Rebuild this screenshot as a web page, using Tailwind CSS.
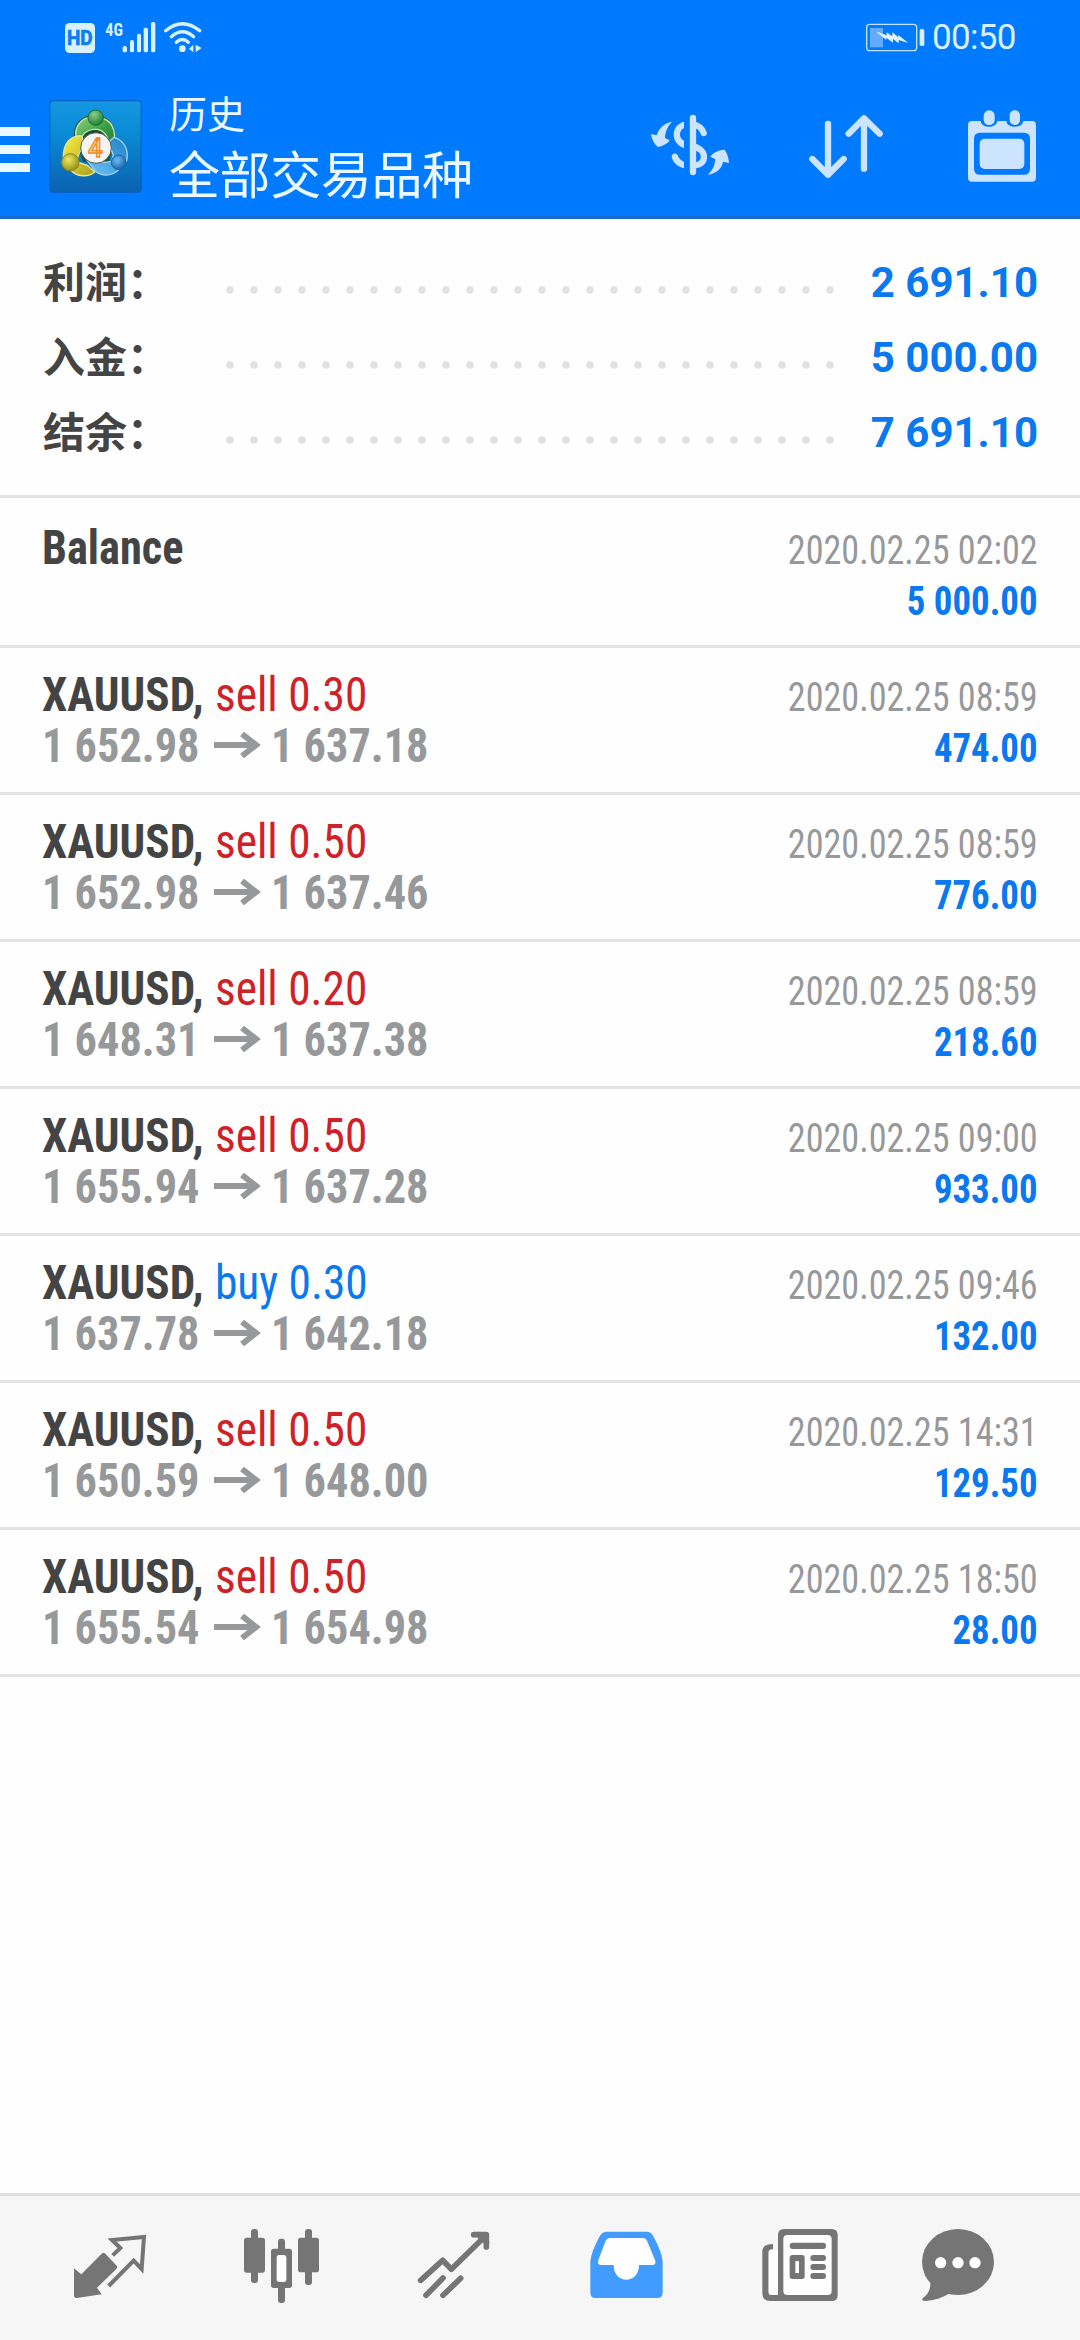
<!DOCTYPE html>
<html lang="zh-CN">
<head>
<meta charset="utf-8">
<title>历史</title>
<script src="https://cdn.jsdelivr.net/npm/@tailwindcss/browser@4"></script>
</head>
<body class="bg-white">
<div class="flex h-[2340px] w-[1080px] flex-col overflow-hidden bg-[#fefefe] font-['Roboto','Noto_Sans_CJK_SC',sans-serif]">

  <header class="h-[219px] shrink-0 border-b-[3px] border-[#1469cb] bg-[#007aff]">
    <div class="flex h-[76px] justify-between">
      <!-- HD badge, mobile signal, wifi -->
      <svg class="ml-[55px] mt-[10px] h-[55px] w-[160px]" viewBox="0 0 480 165" fill="#d9f0ff">
        <rect x="30" y="39" width="90" height="90" rx="14"/>
        <text x="36" y="105" font-family="Roboto" font-weight="700" font-size="59" textLength="77" lengthAdjust="spacingAndGlyphs" fill="#0f7cf0" stroke="#0f7cf0" stroke-width="2">HD</text>
        <text x="151" y="77" font-family="Roboto Condensed" font-weight="700" font-size="57" textLength="53" lengthAdjust="spacingAndGlyphs">4G</text>
        <rect x="203" y="108" width="13" height="19" rx="5"/>
        <rect x="225" y="90" width="12" height="37" rx="5"/>
        <rect x="246" y="71" width="12" height="56" rx="5"/>
        <rect x="266" y="53" width="13" height="74" rx="5"/>
        <rect x="288" y="36" width="13" height="91" rx="5"/>
        <g fill="none" stroke="#d9f0ff" stroke-width="10" stroke-linecap="round">
          <path d="M332 62Q382 20 434 62"/><path d="M349 80Q382 50 416 80"/><path d="M364 97Q382 80 400 97"/>
        </g>
        <circle cx="382" cy="116" r="10"/>
        <path d="M402 116L415 104V127ZM422 104L440 114L430 121L422 127Z"/>
      </svg>
      <!-- battery and clock -->
      <div class="mr-[57px] flex pt-[10px]">
        <svg class="h-[55px] w-[77px]" viewBox="0 0 231 165">
          <rect x="35" y="43" width="150" height="79" rx="9" fill="none" stroke="#bfe3ff" stroke-width="4"/>
          <rect x="45" y="54" width="39" height="58" fill="#62abff"/>
          <path d="M62 64L95 76V67L112 79V67L130 82V75L160 99L131 90V100L114 87V98L94 83V90Z" fill="#e2f4ff"/>
          <rect x="194" y="57" width="14" height="51" rx="5" fill="#d9f0ff"/>
        </svg>
        <span class="w-[91px] pt-px text-[35px] leading-[54px] tracking-[-0.7px] text-[#d9f0ff]">00:50</span>
      </div>
    </div>

    <div class="flex h-[140px]">
      <div class="flex w-[30px] shrink-0 flex-col gap-[9px] pt-[51px]">
        <i class="h-[9px] bg-[#ebf8ff]"></i><i class="h-[9px] bg-[#ebf8ff]"></i><i class="h-[9px] bg-[#ebf8ff]"></i>
      </div>
      <svg class="ml-[19px] mt-6 size-[93px] shrink-0" viewBox="27 30 279 279">
        <defs>
          <linearGradient id="bg" x1="0" y1="0" x2="0" y2="1"><stop offset="0" stop-color="#1497e2"/><stop offset=".35" stop-color="#0a8bd6"/><stop offset="1" stop-color="#0a62b0"/></linearGradient>
          <linearGradient id="green" x1="0" y1="0" x2="1" y2="1"><stop offset="0" stop-color="#93d283"/><stop offset=".5" stop-color="#3b9f45"/><stop offset="1" stop-color="#1b7a33"/></linearGradient>
          <linearGradient id="gold" x1="0" y1="0" x2="1" y2="1"><stop offset="0" stop-color="#f6ee4a"/><stop offset=".5" stop-color="#d4c52c"/><stop offset="1" stop-color="#a8a01f"/></linearGradient>
          <linearGradient id="blue" x1="1" y1="0" x2="0" y2="1"><stop offset="0" stop-color="#1f7fc8"/><stop offset="1" stop-color="#6fc4f5"/></linearGradient>
          <radialGradient id="gh" cx=".4" cy=".3" r=".7"><stop offset="0" stop-color="#8ccf86"/><stop offset="1" stop-color="#1e7f34"/></radialGradient>
          <radialGradient id="yh" cx=".4" cy=".35" r=".7"><stop offset="0" stop-color="#f0e85c"/><stop offset="1" stop-color="#8c8a18"/></radialGradient>
          <radialGradient id="bh" cx=".4" cy=".35" r=".7"><stop offset="0" stop-color="#6fbdf0"/><stop offset="1" stop-color="#0d5fa8"/></radialGradient>
        </defs>
        <rect x="29" y="32" width="275" height="275" rx="12" fill="url(#bg)" stroke="#0861c4" stroke-width="4"/>
        <path d="M105 150C92 100 130 72 167 76C212 76 236 118 222 170L205 215L130 215Z" fill="#17502c"/>
        <g stroke-width="4">
          <path d="M108 140C102 105 130 82 150 84L182 84C212 88 232 120 220 165L206 182C210 150 200 124 172 118L158 118C140 122 128 130 124 146Z" fill="url(#green)" stroke="#c4e6b8"/>
          <path d="M126 138C92 134 68 162 70 205L92 240C110 262 146 262 164 246L142 226L112 216C112 192 118 180 134 172Z" fill="url(#gold)" stroke="#e9e6a0"/>
          <path d="M222 142C250 150 268 178 260 212L240 236C216 262 178 262 160 236L142 212C166 216 186 222 214 214L220 196C216 182 206 170 206 156Z" fill="url(#blue)" stroke="#9bd6fa"/>
        </g>
        <circle cx="167" cy="83" r="23" fill="url(#gh)" stroke="#1b6e30" stroke-width="3"/>
        <circle cx="91" cy="217" r="26" fill="url(#yh)" stroke="#8a8620" stroke-width="3"/>
        <circle cx="236" cy="217" r="22" fill="url(#bh)" stroke="#1663a8" stroke-width="3"/>
        <circle cx="168" cy="174" r="46" fill="#f6f4f1" stroke="#4b5a55" stroke-width="3"/>
        <text x="144" y="201" font-family="Roboto" font-weight="500" font-size="78" textLength="44" lengthAdjust="spacingAndGlyphs" fill="#fde2b8" stroke="#f08a24" stroke-width="4">4</text>
      </svg>
      <div class="ml-[27px] flex-1 pt-[12px] text-[#ebf8ff]">
        <div class="text-[38px] leading-[54px]">历史</div>
        <div class="mt-[2px] text-[51px] leading-[66px] tracking-[-0.4px]">全部交易品种</div>
      </div>
      <div class="flex w-[468px] shrink-0">
        <svg class="h-[140px] w-[156px]" viewBox="36 228 468 420" fill="#cce4ff">
          <g fill="none" stroke="#cce4ff" stroke-width="19" stroke-linecap="round">
            <path d="M279 354V516"/>
            <path d="M311 399C306 384 298 377 279 373M279 439C302 444 312 458 312 470C312 486 300 496 279 496"/>
          </g>
          <path d="M252 365C232 370 221 386 221 403C221 424 234 439 252 444V422C244 418 240 411 240 403C240 395 244 388 252 384Z"/>
          <path d="M252 505C232 500 219 487 215 471C214 462 228 456 233 466C237 476 243 482 252 485Z"/>
          <path d="M216 365C202 380 196 396 195 414L209 421C204 430 190 438 174 441C162 432 155 417 153 402L170 406C176 385 192 370 216 365Z"/>
          <path d="M324 524C338 512 344 496 346 478L331 470C338 459 352 451 374 449C382 460 386 474 387 489L369 485C366 505 348 521 324 524Z"/>
        </svg>
        <svg class="h-[140px] w-[156px]" viewBox="504 228 468 420" fill="none" stroke="#cce4ff" stroke-width="19" stroke-linecap="round" stroke-linejoin="round">
          <path d="M684 372V524M637 477L684 524L731 477M792 506V355M746 401L792 355L839 401"/>
        </svg>
        <svg class="h-[140px] w-[156px]" viewBox="972 228 468 420" fill="#cce4ff">
          <path fill-rule="evenodd" d="M1116 363H1142C1144 386 1190 386 1192 363H1219C1221 386 1268 386 1270 363H1296Q1308 363 1308 375V533Q1308 545 1296 545H1116Q1104 545 1104 533V375Q1104 363 1116 363ZM1140 398Q1122 398 1122 416V506Q1122 524 1140 524H1272Q1290 524 1290 506V416Q1290 398 1272 398Z"/>
          <rect x="1139" y="416" width="134" height="91" rx="15"/>
          <rect x="1151" y="331" width="33" height="44" rx="16"/><rect x="1229" y="331" width="31" height="44" rx="15"/>
        </svg>
      </div>
    </div>
  </header>

  <section id="summary" class="h-[279px] shrink-0 border-b-[3px] border-[#e3e3e3] pl-[42px] pr-[42px] pt-[26px]"></section>
  <main id="deals" class="flex-1 font-['Roboto_Condensed','Noto_Sans_CJK_SC',sans-serif]"></main>

  <nav class="flex h-[147px] shrink-0 border-t-[3px] border-[#dfdfdf] bg-[#f6f6f6] pl-6">
    <!-- quotes -->
    <svg class="h-[144px] w-[172px]" viewBox="-48 48 516 432" fill="#757575">
      <path d="M102 265L124 283L185 221Q190 216 196 221L230 257Q233 262 229 267L171 323L185 343L110 354Q102 355 102 346Z"/>
      <path d="M218 226L241 204L216 180L312 171L305 267L281 242L206 318" fill="none" stroke="#757575" stroke-width="12"/>
    </svg>
    <!-- chart -->
    <svg class="h-[144px] w-[172px]" viewBox="468 48 516 432" fill="#757575">
      <rect x="633" y="147" width="21" height="162" rx="9"/><rect x="612" y="173" width="63" height="105" rx="8"/>
      <rect x="795" y="147" width="21" height="168" rx="9"/><rect x="774" y="173" width="63" height="104" rx="8"/>
      <rect x="714" y="176" width="21" height="193" rx="9"/><rect x="693" y="206" width="63" height="118" rx="8"/>
      <rect x="710" y="225" width="29" height="81" rx="8" fill="#fefefe"/>
    </svg>
    <!-- trade -->
    <svg class="h-[144px] w-[172px]" viewBox="984 48 516 432" fill="none" stroke="#757575" stroke-width="17" stroke-linecap="round" stroke-linejoin="round">
      <path d="M1142 301L1208 241L1234 268L1336 168M1301 164H1339V201"/>
      <path d="M1158 346L1209 294M1209 346L1262 295"/>
      <path d="M1316 164L1339 187"/>
    </svg>
    <!-- history -->
    <svg class="h-[144px] w-[172px]" viewBox="0 48 516 432" fill="#429bff">
      <path d="M200 155H320Q333 155 339 167Q366 215 368 245V338Q368 354 352 354H167Q151 354 151 338V245Q153 215 180 167Q187 155 200 155Z"/>
      <path d="M210 174H309Q317 174 321 182L346 242Q348 255 338 255H297C297 314 221 314 221 255H182Q172 254 174 243L197 182Q201 174 210 174Z" fill="#fefefe"/>
    </svg>
    <!-- news -->
    <svg class="h-[144px] w-[172px]" viewBox="516 48 516 432" fill="#757575">
      <path d="M714 165Q714 147 732 147H875Q893 147 893 165V345Q893 363 875 363H690Q667 363 667 340V214Q667 192 699 192V208Q686 208 686 216V336Q686 345 695 345H714Z"/>
      <rect x="699" y="185" width="15" height="90" fill="#f6f6f6"/>
      <rect x="686" y="209" width="28" height="136" rx="8" fill="#fefefe"/>
      <rect x="730" y="165" width="145" height="180" rx="12" fill="#fefefe"/>
      <rect x="749" y="188" width="109" height="19" rx="9"/>
      <rect x="749" y="225" width="45" height="72" rx="8"/><rect x="766" y="243" width="11" height="36" fill="#fefefe"/>
      <rect x="811" y="225" width="47" height="18" rx="9"/><rect x="811" y="252" width="47" height="18" rx="9"/><rect x="811" y="279" width="47" height="18" rx="9"/>
    </svg>
    <!-- mailbox -->
    <svg class="h-[144px] w-[172px] shrink-0" viewBox="1032 48 516 432" fill="#757575">
      <ellipse cx="1254" cy="246" rx="108" ry="99"/>
      <path d="M1171 300C1173 325 1166 342 1148 355Q1143 362 1155 363C1182 362 1207 354 1230 340Z"/>
      <g fill="#fefefe"><circle cx="1202" cy="248" r="17"/><circle cx="1254" cy="248" r="17"/><circle cx="1305" cy="248" r="17"/></g>
    </svg>
  </nav>
</div>

<script>
const totals = [['利润：', '2 691.10'], ['入金：', '5 000.00'], ['结余：', '7 691.10']];
document.getElementById('summary').innerHTML = totals.map(([k, v]) => `
  <div class="flex h-[75px] items-baseline text-[42px] leading-[75px] font-bold">
    <span class="w-[176px] shrink-0 translate-y-px pl-px text-[#444444]">${k}</span>
    <svg class="mt-[15px] h-[8px] w-[624px] shrink-0 self-center" viewBox="0 0 624 8"><path d="M12 4H613" stroke="#e1e1e1" stroke-width="7.5" stroke-linecap="round" stroke-dasharray="0 24"/></svg>
    <span class="flex-1 text-right text-[#0a78ee]">${v}</span>
  </div>`).join('');

const deals = [
  ['sell', '0.30', '1 652.98', '1 637.18', '08:59', '474.00'],
  ['sell', '0.50', '1 652.98', '1 637.46', '08:59', '776.00'],
  ['sell', '0.20', '1 648.31', '1 637.38', '08:59', '218.60'],
  ['sell', '0.50', '1 655.94', '1 637.28', '09:00', '933.00'],
  ['buy', '0.30', '1 637.78', '1 642.18', '09:46', '132.00'],
  ['sell', '0.50', '1 650.59', '1 648.00', '14:31', '129.50'],
  ['sell', '0.50', '1 655.54', '1 654.98', '18:50', '28.00'],
];
const right = (time, sum) => `
    <div class="pt-[3px] text-right text-[40px] leading-[51px]">
      <div class="origin-right scale-x-[.903] text-[#97989a]">2020.02.25 ${time}</div>
      <div class="origin-right scale-x-[.92] font-bold text-[#0a78ee]">${sum}</div>
    </div>`;
document.getElementById('deals').innerHTML = `
  <div class="flex h-[150px] justify-between border-b-[3px] border-[#e3e3e3] px-[42px] pt-6">
    <div class="origin-left scale-x-[.925] text-[48px] leading-[51px] font-bold text-[#444444]">Balance</div>${right('02:02', '5 000.00')}
  </div>` + deals.map(([side, lot, from, to, time, sum]) => `
  <div class="flex h-[147px] justify-between border-b-[3px] border-[#e3e3e3] px-[42px] pt-[21px]">
    <div class="text-[48px] leading-[51px] whitespace-nowrap">
      <div class="flex"><b class="w-[173px] origin-left scale-x-[.94] font-bold text-[#444444]">XAUUSD,</b><span class="origin-left scale-x-[.945] ${side === 'buy' ? 'text-[#0a78ee]' : 'text-[#cf2228]'}">${side} ${lot}</span></div>
      <div class="flex font-bold text-[#97989a]"><span class="w-[172px] origin-left scale-x-[.923]">${from}</span><svg class="mt-[12px] h-[26px] w-[47px]" viewBox="0 0 47 26" fill="none" stroke="#97989a" stroke-width="6"><path d="M0 13H42M28 2L42 13L28 24"/></svg><span class="ml-[10px] origin-left scale-x-[.923]">${to}</span></div>
    </div>${right(time, sum)}
  </div>`).join('');
</script>
</body>
</html>
